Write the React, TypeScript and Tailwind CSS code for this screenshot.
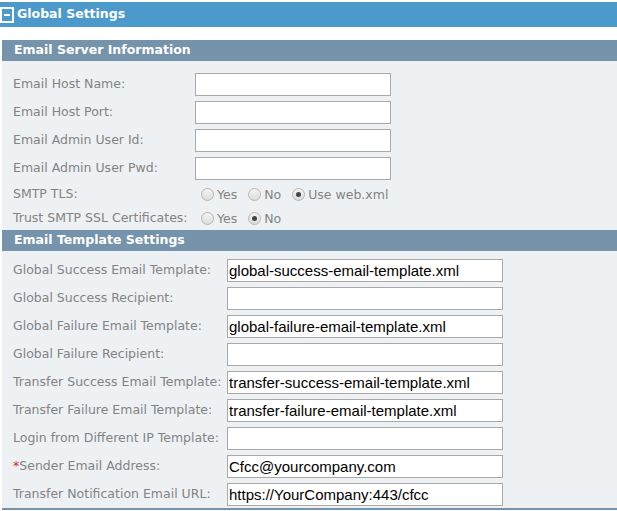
import React from "react";

const serverRows = [
  "Email Host Name:",
  "Email Host Port:",
  "Email Admin User Id:",
  "Email Admin User Pwd:",
];

const templateRows: { label: string; value: string; required?: boolean }[] = [
  { label: "Global Success Email Template:", value: "global-success-email-template.xml" },
  { label: "Global Success Recipient:", value: "" },
  { label: "Global Failure Email Template:", value: "global-failure-email-template.xml" },
  { label: "Global Failure Recipient:", value: "" },
  { label: "Transfer Success Email Template:", value: "transfer-success-email-template.xml" },
  { label: "Transfer Failure Email Template:", value: "transfer-failure-email-template.xml" },
  { label: "Login from Different IP Template:", value: "" },
  { label: "Sender Email Address:", value: "Cfcc@yourcompany.com", required: true },
  { label: "Transfer Notification Email URL:", value: "https://YourCompany:443/cfcc" },
];

function Radio({ label, checked }: { label: string; checked?: boolean }) {
  return (
    <span className="flex items-center mr-[11px]">
      <span className="w-[13px] h-[13px] rounded-full border border-[#b5b5b5] bg-gradient-to-b from-[#f4f4f4] to-[#dcdcdc] flex items-center justify-center">
        {checked && <span className="w-[5px] h-[5px] rounded-full bg-[#444]" />}
      </span>
      <span className="ml-[3px] mt-[3px]">{label}</span>
    </span>
  );
}

function SectionHeader({ title }: { title: string }) {
  return (
    <div className="h-[21px] bg-[#7593ab] text-white font-bold text-[12.5px] pl-[12px] flex items-center">
      {title}
    </div>
  );
}

export default function App() {
  return (
    <div className="w-[617px] h-[511px] bg-white text-[12.5px] text-[#838383] font-['DejaVu_Sans',Verdana,sans-serif] overflow-hidden">
      <div className="mt-[2px] h-[25px] bg-[#4b9acb] flex items-center">
        <span className="w-[14px] h-[16px] border-2 border-white flex items-center justify-center">
          <span className="w-[6px] h-[2px] bg-white" />
        </span>
        <span className="ml-[3px] text-white font-bold text-[12.5px]">Global Settings</span>
      </div>

      <div className="mt-[13px] ml-[2px] bg-[#edf1f4] border-b-2 border-[#7593ab]">
        <SectionHeader title="Email Server Information" />
        <div className="pt-[9px] pl-[11px]">
          {serverRows.map((label) => (
            <div key={label} className="flex items-center h-[28px]">
              <span className="w-[182px]">{label}</span>
              <input
                readOnly
                className="w-[196px] h-[23px] bg-white border border-[#a9a9a9] outline-none"
              />
            </div>
          ))}
          <div className="flex items-center h-[24px]">
            <span className="w-[188px]">SMTP TLS:</span>
            <Radio label="Yes" />
            <Radio label="No" />
            <Radio label="Use web.xml" checked />
          </div>
          <div className="flex items-center h-[24px]">
            <span className="w-[188px]">Trust SMTP SSL Certificates:</span>
            <Radio label="Yes" />
            <Radio label="No" checked />
          </div>
        </div>

        <SectionHeader title="Email Template Settings" />
        <div className="pt-[5px] pl-[11px]">
          {templateRows.map((row) => (
            <div key={row.label} className="flex items-center h-[28px]">
              <span className="w-[214px]">
                {row.required && <span className="text-[#e02020]">*</span>}
                {row.label}
              </span>
              <input
                readOnly
                value={row.value}
                className="w-[276px] h-[23px] bg-white border border-[#a9a9a9] outline-none px-[1px] text-black text-[15px] font-['Liberation_Sans',Arial,sans-serif]"
              />
            </div>
          ))}
        </div>
      </div>
    </div>
  );
}
